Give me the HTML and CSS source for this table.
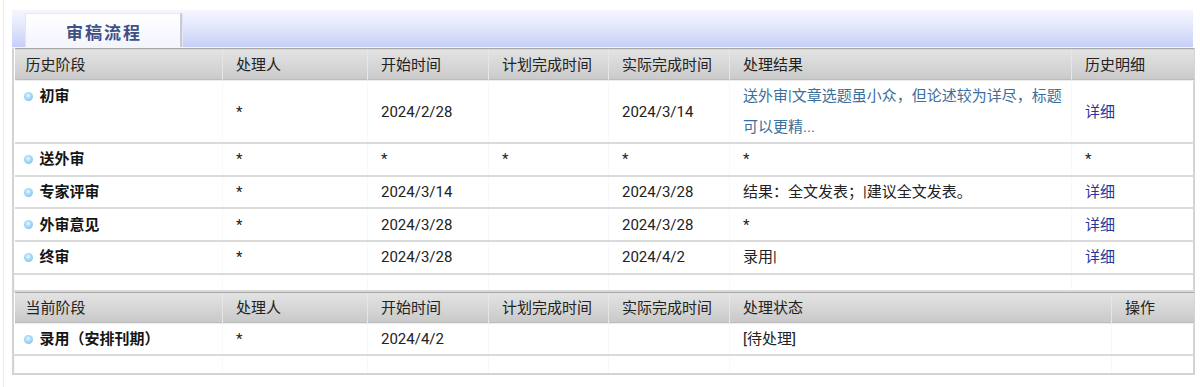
FILE: index.html
```html
<!DOCTYPE html>
<html lang="zh-CN">
<head>
<meta charset="utf-8">
<title>审稿流程</title>
<link rel="stylesheet" href="styles.css">
</head>
<body>
<div class="page">
  <div class="panel">
    <div class="tabbar">
      <div class="tab">审稿流程</div>
    </div>
    <div class="grid-box">
      <table class="flow">
        <colgroup>
          <col class="c-stage"><col class="c-person"><col class="c-start"><col class="c-plan"><col class="c-real"><col class="c-result"><col class="c-detail">
        </colgroup>
        <thead>
          <tr>
            <th class="first">历史阶段</th><th>处理人</th><th>开始时间</th><th>计划完成时间</th><th>实际完成时间</th><th>处理结果</th><th>历史明细</th>
          </tr>
        </thead>
        <tbody>
          <tr>
            <td class="stage top"><span class="dot"></span>初审</td><td>*</td><td>2024/2/28</td><td></td><td>2024/3/14</td>
            <td class="result note">送外审|文章选题虽小众，但论述较为详尽，标题可以更精...</td><td><a class="link">详细</a></td>
          </tr>
          <tr>
            <td class="stage"><span class="dot"></span>送外审</td><td>*</td><td>*</td><td>*</td><td>*</td><td class="result">*</td><td>*</td>
          </tr>
          <tr>
            <td class="stage"><span class="dot"></span>专家评审</td><td>*</td><td>2024/3/14</td><td></td><td>2024/3/28</td><td class="result">结果：全文发表；|建议全文发表。</td><td><a class="link">详细</a></td>
          </tr>
          <tr>
            <td class="stage"><span class="dot"></span>外审意见</td><td>*</td><td>2024/3/28</td><td></td><td>2024/3/28</td><td class="result">*</td><td><a class="link">详细</a></td>
          </tr>
          <tr>
            <td class="stage"><span class="dot"></span>终审</td><td>*</td><td>2024/3/28</td><td></td><td>2024/4/2</td><td class="result">录用|</td><td><a class="link">详细</a></td>
          </tr>
          <tr class="blank"><td></td><td></td><td></td><td></td><td></td><td></td><td></td></tr>
        </tbody>
      </table>
      <table class="flow current">
        <colgroup>
          <col class="c-stage"><col class="c-person"><col class="c-start"><col class="c-plan"><col class="c-real"><col class="c-status"><col class="c-op">
        </colgroup>
        <thead>
          <tr>
            <th class="first">当前阶段</th><th>处理人</th><th>开始时间</th><th>计划完成时间</th><th>实际完成时间</th><th>处理状态</th><th>操作</th>
          </tr>
        </thead>
        <tbody>
          <tr>
            <td class="stage"><span class="dot"></span>录用（安排刊期）</td><td>*</td><td>2024/4/2</td><td></td><td></td><td class="result">[待处理]</td><td></td>
          </tr>
          <tr class="blank last"><td></td><td></td><td></td><td></td><td></td><td></td><td></td></tr>
        </tbody>
      </table>
    </div>
  </div>
</div>
</body>
</html>
```

FILE: styles.css
```css
html, body {
  margin: 0;
  padding: 0;
  background: #ffffff;
}

body {
  font-family: Roboto, "Noto Sans CJK SC", "Noto Sans", sans-serif;
  font-size: 15px;
  color: #222222;
}

.page {
  margin-left: 3px;
  border-left: 1px solid #ececec;
  padding: 10px 5px 12px 8px;
  min-height: 365px;
}

.panel {
  width: 1183px;
}

.tabbar {
  height: 37px;
  margin-right: 2px;
  background: linear-gradient(#f5f6fe 0%, #e3e7fc 45%, #c7cff8 100%);
  display: flex;
  align-items: flex-end;
  padding-left: 13px;
  border-bottom: 1px solid #f4f6ff;
}

.tab {
  width: 157px;
  height: 34px;
  box-sizing: border-box;
  background: linear-gradient(#ffffff 0%, #f3f5fd 100%);
  border-left: 1px solid #e2e5f2;
  border-top: 1px solid #e6e8f4;
  border-right: 2px solid #c9cad6;
  box-shadow: 1px 0 0 #e4e6f4;
  display: flex;
  align-items: center;
  justify-content: center;
  font-weight: bold;
  font-size: 17px;
  letter-spacing: 2px;
  color: #3f5085;
  padding-left: 2px;
  padding-top: 1px;
}

.grid-box {
  border-left: 2px solid #d3d3d3;
  border-right: 2px solid #d3d3d3;
  border-bottom: 2px solid #d3d3d3;
}

.flow {
  width: 100%;
  border-collapse: collapse;
  table-layout: fixed;
}

.c-stage { width: 208px; }
.c-person { width: 145px; }
.c-start { width: 121px; }
.c-plan { width: 120px; }
.c-real { width: 121px; }
.c-result { width: 342px; }
.c-detail { width: 122px; }
.c-status { width: 382px; }
.c-op { width: 82px; }

.flow th {
  height: 31px;
  padding: 0 0 0 13px;
  text-align: left;
  font-weight: normal;
  color: #222222;
  background: linear-gradient(#e3e3e3 0%, #d4d4d4 60%, #c8c8c8 100%);
  border-top: 1px solid #a9a9a9;
  border-bottom: 1px solid #ededed;
  border-left: 1px solid #e6e6e6;
  box-shadow: inset 0 -1px 0 #bcbcbc;
  line-height: 20px;
  white-space: nowrap;
}

.current th {
  height: 30px;
}

.flow th.first {
  padding-left: 11px;
  border-left: none;
}

.flow td {
  height: 30.7px;
  padding: 0 0 0 13px;
  line-height: 20px;
  border-bottom: 2px solid #dadada;
  border-left: 1px solid #f8f8f8;
  vertical-align: middle;
  white-space: nowrap;
}

.flow td.stage {
  padding-left: 9px;
  border-left: none;
  font-weight: bold;
  color: #151515;
}

.flow td.top {
  vertical-align: top;
  line-height: 30px;
}

.flow td.result {
  padding-right: 0;
}

.flow td.note {
  white-space: normal;
  line-height: 30.5px;
  color: #3b6f9c;
}

.dot {
  display: inline-block;
  width: 9px;
  height: 9px;
  border-radius: 50%;
  background: radial-gradient(circle at 45% 40%, #e6f6ff 0%, #a9dcf7 40%, #62b6e6 100%);
  margin-right: 7px;
  vertical-align: middle;
  position: relative;
  top: -1px;
}

.link {
  color: #26379b;
  text-decoration: none;
  cursor: pointer;
}

.flow tr.blank td {
  height: 15px;
  line-height: 15px;
  padding: 0;
}

.flow tr.blank.last td {
  height: 17px;
  border-bottom: none;
}
```
